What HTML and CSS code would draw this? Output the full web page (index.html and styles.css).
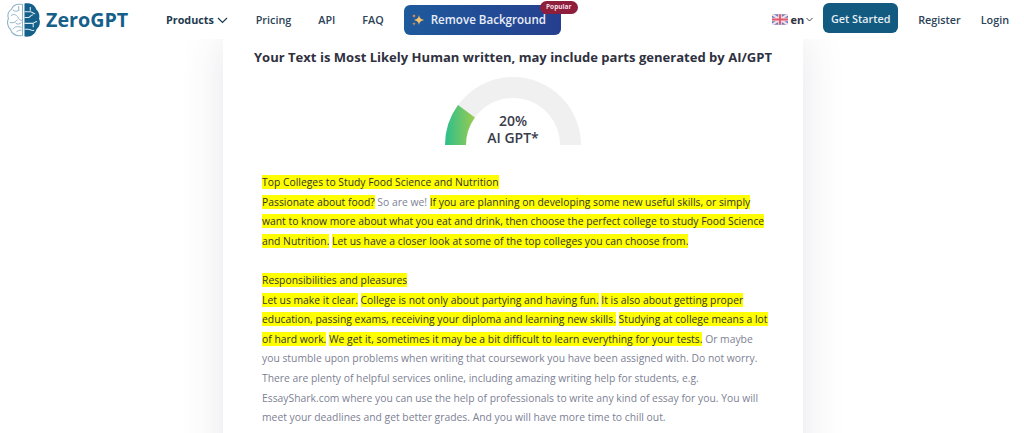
FILE: index.html
```html
<!DOCTYPE html>
<html lang="en">
<head>
  <meta charset="UTF-8" />
  <title>ZeroGPT</title>
  <link rel="stylesheet" href="styles.css">
</head>
<body>
  <header class="navbar">
    <a class="brand">
      <svg class="brand-icon" width="33" height="34" viewBox="0 0 34 35" fill="none">
        <path d="M16 1.500C10 .5 6 2.500 4.500 6.500 1 9 .5 13 1.500 16-.5 20 1 25 3.500 27 5 31.500 9 34.500 16 33.500Z" stroke="#8fb4c8" stroke-width="1.100"/>
        <path d="M4 13c3-2 5-1 7 1M6 7c2 2 5 2 7 0M3 20c3 1 6 0 8-3M6 27c2-3 5-3 9-2M11 14c1 3 3 4 5 4M10 30c1-2 3-2 5-2M9 21c2 1 4 1 6-1M12 3v4" stroke="#8fb4c8" stroke-width="1"/>
        <path d="M18 .5C25-.5 29 2.500 30 6.500 33 9 34 13 33 16 35 20 33.500 25 30.500 27 29 32 25 35.500 18 34.500Z" fill="#14608a"/>
        <path d="M18 9h6c2 0 3 2 5 2M18 15h4c2 0 2-3 5-3M18 21h8c2 0 3-2 5-2M18 27h4c2 0 3 2 6 1M24 4v4M27 21v4" stroke="#dbe9f1" stroke-width="1.100"/>
      </svg>
      <span class="brand-name">ZeroGPT</span>
    </a>
    <nav class="nav-links">
      <a class="nav-link nav-products">Products
        <svg width="11" height="7" viewBox="0 0 11 7" fill="none"><path d="M1 1l4.500 4.500L10 1" stroke="#1d3a4f" stroke-width="1.200"/></svg>
      </a>
      <a class="nav-link">Pricing</a>
      <a class="nav-link">API</a>
      <a class="nav-link">FAQ</a>
      <a class="remove-bg">
        <svg width="14" height="14" viewBox="0 0 14 14"><path d="M8 2c.6 3 1.500 4 5 5-3.500 1-4.400 2-5 5-.6-3-1.500-4-5-5 3.500-1 4.400-2 5-5Z" fill="#f6c26b"/><path d="M3 1c.3 1.300.7 1.700 2 2-1.300.3-1.700.7-2 2-.3-1.300-.7-1.700-2-2 1.300-.3 1.700-.7 2-2ZM3 9c.3 1.200.6 1.500 1.800 1.800C3.600 11.100 3.300 11.400 3 13c-.3-1.600-.6-1.900-1.800-2.200C2.400 10.500 2.700 10.200 3 9Z" fill="#f29a4a"/></svg>
        Remove Background
        <span class="badge">Popular</span>
      </a>
    </nav>
    <div class="nav-right">
      <a class="lang">
        <svg width="16" height="11" viewBox="0 0 15 10"><rect width="15" height="10" rx="1.500" fill="#6d78b8"/><path d="M0 0l15 10M15 0L0 10" stroke="#f3dfe6" stroke-width="2"/><path d="M7.500 0v10M0 5h15" stroke="#f3dfe6" stroke-width="3.400"/><path d="M7.500 0v10M0 5h15" stroke="#e0596f" stroke-width="1.800"/></svg>
        <b>en</b>
        <svg width="7" height="5" viewBox="0 0 7 5" fill="none"><path d="M.5 1l3 3 3-3" stroke="#333" stroke-width=".9"/></svg>
      </a>
      <a class="get-started">Get Started</a>
      <a class="nav-link nav-register">Register</a>
      <a class="nav-link">Login</a>
    </div>
  </header>

  <main class="result-card">
    <h2 class="result-title">Your Text is Most Likely Human written, may include parts generated by AI/GPT</h2>
    <div class="gauge">
      <svg width="136" height="68" viewBox="0 0 136 68">
        <defs>
          <linearGradient id="gaugeGreen" x1="0" x2="1" y1="0" y2="0">
            <stop offset="0" stop-color="#2bbf8e"/>
            <stop offset="1" stop-color="#9ccb4e"/>
          </linearGradient>
        </defs>
        <path d="M0 68A68 68 0 0 1 136 68H115A47 47 0 0 0 21 68Z" fill="#f0f0f0"/>
        <path d="M0 68A68 68 0 0 1 13 28L29.900 40.400A47 47 0 0 0 21 68Z" fill="url(#gaugeGreen)"/>
      </svg>
      <div class="gauge-label">20%<br>AI GPT*</div>
    </div>
    <div class="result-text">
      <p>
        <span class="hl">Top Colleges to Study Food Science and Nutrition</span><br>
        <span class="hl">Passionate about food?</span> So are we! <span class="hl">If you are planning on developing some new useful skills, or simply<br>want to know more about what you eat and drink, then choose the perfect college to study Food Science<br>and Nutrition.</span> <span class="hl">Let us have a closer look at some of the top colleges you can choose from.</span>
      </p>
      <p>
        <span class="hl">Responsibilities and pleasures</span><br>
        <span class="hl">Let us make it clear.</span> <span class="hl">College is not only about partying and having fun.</span> <span class="hl">It is also about getting proper<br>education, passing exams, receiving your diploma and learning new skills.</span> <span class="hl">Studying at college means a lot<br>of hard work.</span> <span class="hl">We get it, sometimes it may be a bit difficult to learn everything for your tests.</span> Or maybe<br>you stumble upon problems when writing that coursework you have been assigned with. Do not worry.<br>There are plenty of helpful services online, including amazing writing help for students, e.g.<br>EssayShark.com where you can use the help of professionals to write any kind of essay for you. You will<br>meet your deadlines and get better grades. And you will have more time to chill out.
      </p>
    </div>
  </main>
</body>
</html>
```

FILE: styles.css
```css
html, body {
  height: 100%;
}
body {
  margin: 0;
  background-color: #fff;
  color: #2f3140;
  font-family: 'Open Sans', 'Noto Sans', sans-serif;
  overflow: hidden;
}
.navbar {
  display: flex;
  align-items: center;
  height: 39px;
  position: relative;
  z-index: 2;
  background-color: #fff;
}
.brand {
  display: flex;
  align-items: center;
  gap: 6px;
  margin-left: 7px;
  width: 159px;
  flex-shrink: 0;
}
.brand-name {
  font-size: 19.700px;
  font-weight: 700;
  color: #14608a;
}
.nav-links {
  display: flex;
  align-items: center;
}
.nav-link {
  font-size: 10.800px;
  font-weight: 600;
  color: #2c4256;
  white-space: nowrap;
}
.nav-products {
  font-weight: 700;
  color: #1d3a4f;
  margin-right: 28px;
}
.nav-links .nav-link:nth-child(2) { margin-right: 27px; }
.nav-links .nav-link:nth-child(3) { margin-right: 27px; }
.nav-links .nav-link:nth-child(4) { margin-right: 20px; }
.remove-bg {
  position: relative;
  display: flex;
  align-items: center;
  gap: 6px;
  width: 157px;
  height: 30px;
  padding-left: 7px;
  box-sizing: border-box;
  border-radius: 6px;
  background: linear-gradient(90deg, #1e5a9c, #263f8f);
  color: #e9eef7;
  font-size: 11.600px;
  font-weight: 600;
  white-space: nowrap;
}
.badge {
  position: absolute;
  top: -4px;
  right: -17px;
  width: 38px;
  height: 13px;
  line-height: 12px;
  text-align: center;
  border-radius: 7px;
  background-color: #8d1f3d;
  color: #f5dfe4;
  font-size: 6.500px;
  font-weight: 700;
}
.nav-right {
  display: flex;
  align-items: center;
  margin-left: auto;
  margin-right: 15px;
}
.lang {
  display: flex;
  align-items: center;
  gap: 2px;
  font-size: 11px;
  margin-right: 10px;
}
.get-started {
  width: 75px;
  height: 30px;
  line-height: 31px;
  text-align: center;
  border-radius: 6px;
  background-color: #125a80;
  color: #e6eff4;
  font-size: 10.800px;
  font-weight: 600;
  margin-bottom: 3px;
  margin-right: 20px;
}
.nav-register {
  margin-right: 20px;
}
.result-card {
  width: 580px;
  min-height: 500px;
  margin-left: 223px;
  padding-top: 9px;
  box-sizing: border-box;
  background-color: #fff;
  box-shadow: 0 0 40px rgba(60, 60, 90, .13);
}
.result-title {
  margin: 0;
  font-size: 13.050px;
  font-weight: 700;
  text-align: center;
  white-space: nowrap;
}
.gauge {
  position: relative;
  width: 136px;
  height: 68px;
  margin: 11px auto 0;
}
.gauge svg {
  display: block;
}
.gauge-label {
  position: absolute;
  left: 0;
  right: 0;
  bottom: -.5px;
  font-size: 14px;
  font-weight: 600;
  line-height: 17px;
  text-align: center;
  color: #3a3c4a;
}
.result-text {
  margin-top: 28px;
  padding: 0 30px 0 39px;
  font-size: 10.350px;
  line-height: 19.600px;
  color: #7d7f94;
  white-space: nowrap;
}
.result-text p {
  margin: 0 0 19.600px;
}
.hl {
  background-color: #ffff00;
  color: #333;
}
```
